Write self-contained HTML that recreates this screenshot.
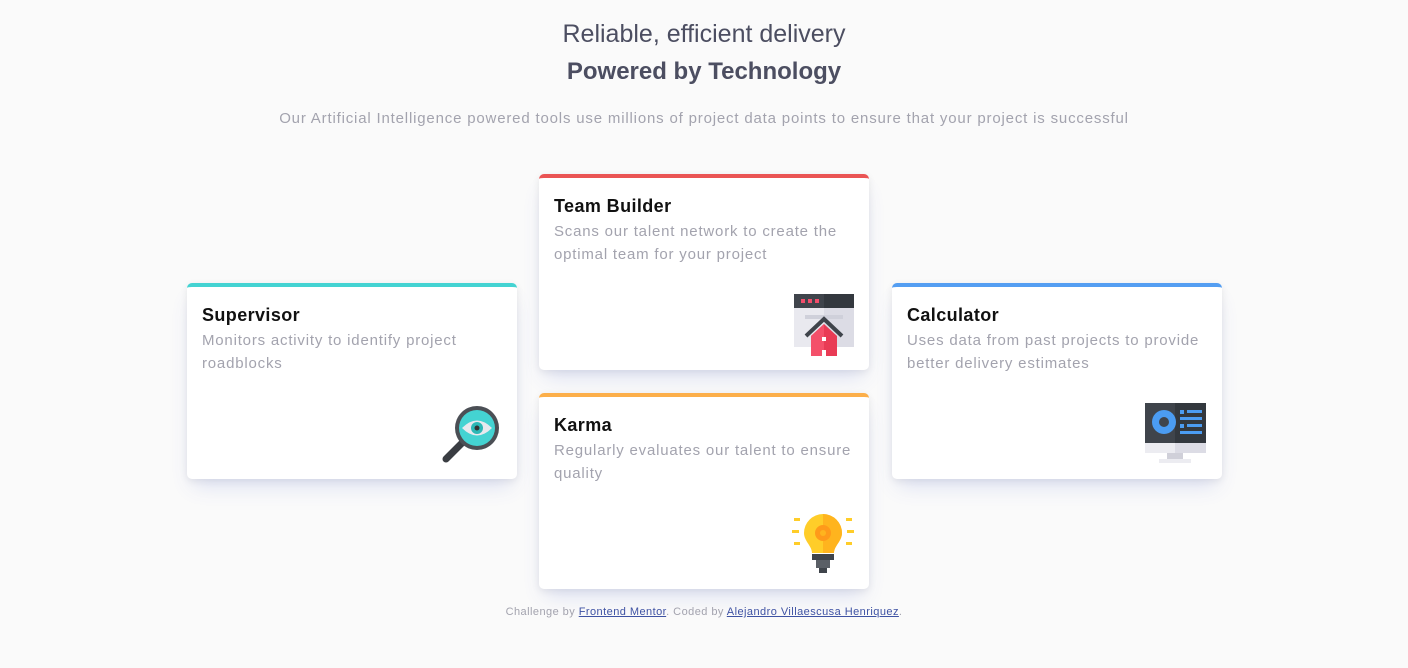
<!DOCTYPE html>
<html><head><meta charset="utf-8"><style>
body{margin:0;width:1408px;height:668px;background:#fafafa;font-family:"Liberation Sans",sans-serif;position:relative;overflow:hidden}
.t{position:absolute;left:0;width:1408px;text-align:center}
.card{position:absolute;width:330px;height:196px;background:#fff;border-radius:5px;box-shadow:0 12px 20px -6px rgba(73,93,207,0.18),0 2px 8px rgba(0,0,0,0.08);box-sizing:border-box;border-top:4px solid}
.card h2{position:absolute;left:15px;top:18px;margin:0;font-size:18px;font-weight:bold;color:#111;letter-spacing:0.4px}
.card p{position:absolute;left:15px;top:42px;width:305px;margin:0;font-size:15px;line-height:23px;color:#a3a3ae;letter-spacing:0.8px}
.card svg{position:absolute;right:15px;bottom:14px}
a{color:#3e52a3;text-decoration:underline}
</style></head><body>
<div class="t" style="top:20px;font-size:25px;color:#4c4e61">Reliable, efficient delivery</div>
<div class="t" style="top:58px;font-size:24px;font-weight:bold;color:#4c4e61">Powered by Technology</div>
<div class="t" style="top:110px;font-size:15px;color:#a3a3ae;letter-spacing:0.82px">Our Artificial Intelligence powered tools use millions of project data points to ensure that your project is successful</div>

<div class="card" style="left:187px;top:283px;border-color:#44d3d2">
<h2>Supervisor</h2><p>Monitors activity to identify project roadblocks</p>
<svg width="62" height="62" viewBox="0 0 62 62"><line x1="6" y1="56" x2="24" y2="38" stroke="#3a3d42" stroke-width="7" stroke-linecap="round"/><circle cx="37" cy="25" r="22" fill="#4b4f55"/><circle cx="37" cy="25" r="18" fill="#44d3d2"/><path d="M22 25Q37 10 52 25Q37 40 22 25Z" fill="#e8e9ee"/><circle cx="37" cy="25" r="6" fill="#2cb8b6"/><circle cx="37" cy="25" r="2.5" fill="#333"/></svg>
</div>

<div class="card" style="left:539px;top:174px;border-color:#ea5454">
<h2>Team Builder</h2><p>Scans our talent network to create the optimal team for your project</p>
<svg width="60" height="62" viewBox="0 0 60 62"><rect x="0" y="0" width="60" height="53" fill="#e9e9ef"/><rect x="30" y="0" width="30" height="53" fill="#dcdce5"/><rect x="0" y="0" width="60" height="14" fill="#3f444b"/><rect x="30" y="0" width="30" height="14" fill="#33383e"/><rect x="7" y="5" width="4" height="4" fill="#f24d6b"/><rect x="14" y="5" width="4" height="4" fill="#f24d6b"/><rect x="21" y="5" width="4" height="4" fill="#f24d6b"/><rect x="11" y="21" width="38" height="4" fill="#cfd0da"/><path d="M12 42L30 25L48 42" stroke="#3f444b" stroke-width="4" fill="none"/><path d="M17 42L30 30L43 42V62H17Z" fill="#e93b55"/><path d="M30 30L17 42V62H30Z" fill="#f4506a"/><rect x="28" y="43" width="4" height="4" fill="#fff"/><rect x="28" y="56" width="4" height="6" fill="#fff"/></svg>
</div>

<div class="card" style="left:539px;top:393px;border-color:#fcaf4a">
<h2>Karma</h2><p>Regularly evaluates our talent to ensure quality</p>
<svg width="62" height="62" viewBox="0 0 62 62"><g fill="#ffcd29"><rect x="2" y="5" width="6" height="3"/><rect x="0" y="17" width="7" height="3"/><rect x="2" y="29" width="6" height="3"/><rect x="54" y="5" width="6" height="3"/><rect x="55" y="17" width="7" height="3"/><rect x="54" y="29" width="6" height="3"/></g><path d="M31 1A19 19 0 0 0 12 20C12 28 20 33 20 40H42C42 33 50 28 50 20A19 19 0 0 0 31 1Z" fill="#ffcd29"/><path d="M31 1A19 19 0 0 1 50 20C50 28 42 33 42 40H31Z" fill="#ffb41e"/><circle cx="31" cy="20" r="8" fill="#ff9a1a"/><circle cx="31" cy="20" r="3" fill="#ffb41e"/><rect x="20" y="41" width="22" height="6" fill="#3f444b"/><rect x="24" y="47" width="14" height="8" fill="#5a5f66"/><rect x="27" y="55" width="8" height="5" fill="#3f444b"/></svg>
</div>

<div class="card" style="left:892px;top:283px;border-color:#549ef2">
<h2>Calculator</h2><p>Uses data from past projects to provide better delivery estimates</p>
<svg width="62" height="62" viewBox="0 0 62 62"><rect x="0" y="0" width="61" height="40" fill="#3f444b"/><rect x="30" y="0" width="31" height="40" fill="#33383e"/><rect x="0" y="40" width="61" height="10" fill="#ececf1"/><rect x="30" y="40" width="31" height="10" fill="#dcdce5"/><rect x="22" y="50" width="16" height="6" fill="#d0d0d9"/><rect x="14" y="56" width="32" height="4" fill="#ececf1"/><circle cx="19" cy="19" r="12" fill="#4b9cf2"/><circle cx="19" cy="19" r="5" fill="#3f444b"/><g fill="#4b9cf2"><rect x="35" y="7" width="4" height="4"/><rect x="42" y="7" width="15" height="3"/><rect x="35" y="14" width="22" height="3"/><rect x="35" y="21" width="4" height="4"/><rect x="42" y="21" width="15" height="3"/><rect x="35" y="28" width="22" height="3"/></g></svg>
</div>

<div class="t" style="top:606px;font-size:11px;color:#a3a3ae;letter-spacing:0.45px">Challenge by <a>Frontend Mentor</a>. Coded by <a>Alejandro Villaescusa Henriquez</a>.</div>
</body></html>
